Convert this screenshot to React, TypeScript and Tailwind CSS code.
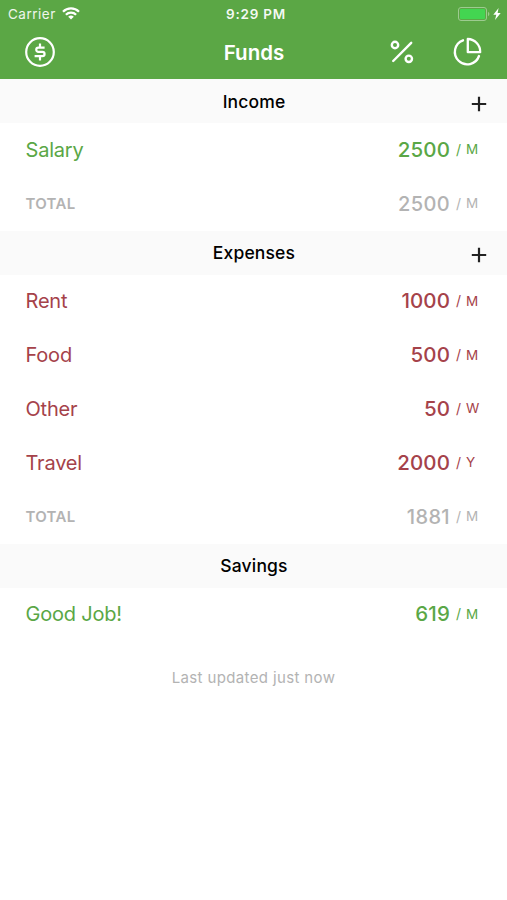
import React from 'react';

type Tone = 'green' | 'red' | 'gray';

interface Entry {
  label: string;
  amount: number;
  unit: 'W' | 'M' | 'Y';
  tone: Tone;
  isTotal?: boolean;
}

interface Section {
  title: string;
  canAdd: boolean;
  entries: Entry[];
}

const sections: Section[] = [
  {
    title: 'Income',
    canAdd: true,
    entries: [
      { label: 'Salary', amount: 2500, unit: 'M', tone: 'green' },
      { label: 'TOTAL', amount: 2500, unit: 'M', tone: 'gray', isTotal: true },
    ],
  },
  {
    title: 'Expenses',
    canAdd: true,
    entries: [
      { label: 'Rent', amount: 1000, unit: 'M', tone: 'red' },
      { label: 'Food', amount: 500, unit: 'M', tone: 'red' },
      { label: 'Other', amount: 50, unit: 'W', tone: 'red' },
      { label: 'Travel', amount: 2000, unit: 'Y', tone: 'red' },
      { label: 'TOTAL', amount: 1881, unit: 'M', tone: 'gray', isTotal: true },
    ],
  },
  {
    title: 'Savings',
    canAdd: false,
    entries: [{ label: 'Good Job!', amount: 619, unit: 'M', tone: 'green' }],
  },
];

const toneClass: Record<Tone, string> = {
  green: 'text-[#5aa746]',
  red: 'text-[#a5424a]',
  gray: 'text-[#b3b3b3]',
};

function StatusBar() {
  return (
    <div className="grid h-[27px] grid-cols-3 items-center pl-[8px] pr-[6px] text-[13.5px]">
      <div className="flex items-center gap-[6px] text-white/90">
        <span className="pt-px tracking-[0.5px]">Carrier</span>
        <svg width="18" height="13" viewBox="0 0 18 13" fill="none" stroke="white" strokeWidth="2.3">
          <path d="M1 4.7a11.4 11.4 0 0 1 16 0" />
          <path d="M3.9 7.7a7.2 7.2 0 0 1 10.2 0" />
          <path d="M9 12.6 6.2 9.8a4 4 0 0 1 5.6 0z" fill="white" stroke="none" />
        </svg>
      </div>
      <span className="pl-[3px] pt-px text-center text-[13.5px] font-semibold tracking-[0.75px] text-white/95">9:29 PM</span>
      <div className="flex items-center justify-end gap-[3px]">
        <svg width="32" height="14" viewBox="0 0 32 14" fill="none">
          <rect x="0.5" y="0.5" width="28" height="13" rx="2.5" stroke="#9dcb90" />
          <rect x="2" y="2" width="25" height="10" rx="1" fill="#43d551" />
          <path d="M30 4.8c1.9.8 1.9 3.6 0 4.4z" fill="#9dcb90" />
        </svg>
        <svg width="8" height="12" viewBox="0 0 8 12" fill="white">
          <path d="M5.6 0 .3 6.8h3L2 12l5.7-7H4.6z" />
        </svg>
      </div>
    </div>
  );
}

function NavBar() {
  return (
    <div className="grid h-[50px] grid-cols-3 items-center pl-[24px] pr-[25px] text-white">
      <button aria-label="Currency" className="w-fit">
        <svg width="32" height="32" viewBox="0 0 32 32" fill="none" stroke="currentColor" strokeWidth="2.2">
          <circle cx="16" cy="16" r="13.8" />
          <path d="M20.6 11.6h-6.2a2.15 2.15 0 0 0 0 4.3h4a2.15 2.15 0 0 1 0 4.3h-7.8M16 7.4v4.2M16 20.2v4.2" />
        </svg>
      </button>
      <h1 className="pl-[2px] pt-[3px] text-center text-[20.5px] font-semibold leading-none">Funds</h1>
      <div className="flex items-center justify-end gap-[38px]">
        <button aria-label="Percentage">
          <svg width="24" height="24" viewBox="0 0 24 24" fill="none" stroke="currentColor" strokeWidth="2.4" strokeLinecap="round">
            <circle cx="5" cy="5" r="3.2" />
            <circle cx="18.8" cy="18.8" r="3.2" />
            <path d="M21.2 2.8 3.2 21" />
          </svg>
        </button>
        <button aria-label="Chart">
          <svg width="30" height="30" viewBox="0 0 30 30" fill="none" stroke="currentColor" strokeWidth="2.3" strokeLinecap="round" strokeLinejoin="round">
            <path d="M11 3.3A12.4 12.4 0 1 0 27 19" />
            <path d="M15.8 2v13.2h12.4A12.8 12.8 0 0 0 15.8 2z" />
          </svg>
        </button>
      </div>
    </div>
  );
}

function SectionHeader({ title, canAdd }: { title: string; canAdd: boolean }) {
  return (
    <div className="grid h-[44px] grid-cols-[1fr_auto_1fr] items-center bg-[#fafafa] pr-[20px] pl-[20px]">
      <span />
      <h2 className="pt-[2px] pl-px text-[17.5px] font-medium tracking-[0.15px] text-black">{title}</h2>
      {canAdd && (
        <button aria-label={`Add to ${title}`} className="justify-self-end pt-[5px]">
          <svg width="16" height="16" viewBox="0 0 16 16" fill="none" stroke="#222222" strokeWidth="2.2">
            <path d="M8 .8v14.4M.8 8h14.4" />
          </svg>
        </button>
      )}
    </div>
  );
}

function EntryRow({ entry }: { entry: Entry }) {
  return (
    <li className={`flex h-[53.8px] items-center justify-between pl-[25.5px] pr-[24px] ${toneClass[entry.tone]}`}>
      <span className={entry.isTotal ? 'pt-px text-[15px] font-semibold tracking-[0.3px]' : 'text-[20px] tracking-[-0.2px]'}>
        {entry.label}
      </span>
      <div className="flex items-center">
        <span
          className={
            entry.isTotal
              ? 'text-[20px] font-medium tracking-[0.35px]'
              : 'text-[20.5px] font-medium tracking-[0.1px]'
          }
        >
          {entry.amount}
        </span>
        <span className="ml-[6px] w-[10px] pb-px text-[14px]">/</span>
        <span className="w-[17px] pb-px text-[13.5px]">{entry.unit}</span>
      </div>
    </li>
  );
}

function App() {
  return (
    <div className="min-h-screen w-full bg-white font-['Inter',sans-serif]">
      <header className="h-[79px] bg-[#5ba745]">
        <StatusBar />
        <NavBar />
      </header>

      <main>
        {sections.map(section => (
          <section key={section.title}>
            <SectionHeader title={section.title} canAdd={section.canAdd} />
            <ul>
              {section.entries.map(entry => (
                <EntryRow key={entry.label} entry={entry} />
              ))}
            </ul>
          </section>
        ))}
        <p className="mt-[26px] text-center text-[15px] tracking-[0.37px] text-[#b3b3b3]">Last updated just now</p>
      </main>
    </div>
  );
}

export default App;
